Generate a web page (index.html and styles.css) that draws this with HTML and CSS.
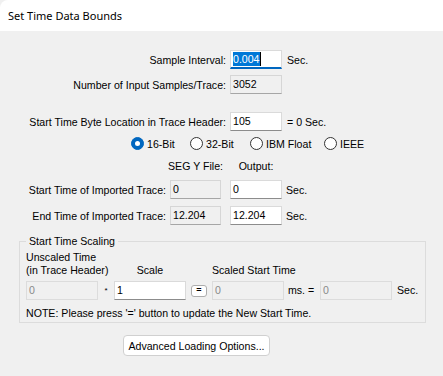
FILE: index.html
```html
<!DOCTYPE html>
<html lang="en">
<head>
  <meta charset="UTF-8">
  <title>Set Time Data Bounds</title>
  <link rel="stylesheet" href="styles.css">
</head>
<body>

  <div class="titlebar">Set Time Data Bounds</div>

  <div class="dialog">

    <div class="row">
      <span class="lbl-wide">Sample Interval:</span>
      <span class="box box-focus"><span class="sel">0.004</span><span class="caret"></span></span>
      <span class="unit">Sec.</span>
    </div>

    <div class="row row-samples">
      <span class="lbl-wide">Number of Input Samples/Trace:</span>
      <span class="box box-ro">3052</span>
    </div>

    <div class="row row-byte">
      <span class="lbl-wide">Start Time Byte Location in Trace Header:</span>
      <span class="box">105</span>
      <span class="unit">= 0 Sec.</span>
    </div>

    <div class="radios">
      <label class="radio"><span class="dot checked"></span>16-Bit</label>
      <label class="radio"><span class="dot"></span>32-Bit</label>
      <label class="radio"><span class="dot"></span>IBM Float</label>
      <label class="radio"><span class="dot"></span>IEEE</label>
    </div>

    <div class="trace-grid">
      <span></span>
      <span class="col-head">SEG Y File:</span>
      <span class="col-head col-out">Output:</span>
      <span></span>

      <span class="lbl-trace">Start Time of Imported Trace:</span>
      <span class="box box-ro box-seg">0</span>
      <span class="box box-out">0</span>
      <span class="unit">Sec.</span>

      <span class="lbl-trace">End Time of Imported Trace:</span>
      <span class="box box-ro box-seg">12.204</span>
      <span class="box box-out">12.204</span>
      <span class="unit">Sec.</span>
    </div>

    <fieldset class="group">
      <legend>Start Time Scaling</legend>
      <div class="scale-grid">
        <span class="hd-unscaled">Unscaled Time<br>(in Trace Header)</span>
        <span class="hd-scale">Scale</span>
        <span></span>
        <span class="hd-scaled">Scaled Start Time</span>

        <span class="box box-off">0</span>
        <span class="times">*</span>
        <span class="box box-scale">1</span>
        <button class="eq-btn">=</button>
        <span class="box box-off">0</span>
        <span class="ms">ms. =</span>
        <span class="box box-off">0</span>
        <span class="sec">Sec.</span>

        <span class="note">NOTE: Please press '=' button to update the New Start Time.</span>
      </div>
    </fieldset>

    <button class="adv-btn">Advanced Loading Options...</button>

  </div>

</body>
</html>
```

FILE: styles.css
```css
* {
  box-sizing: border-box;
}

body {
  margin: 0;
  background: #f0f0f0;
  font-family: "Liberation Sans", Arial, sans-serif;
  font-size: 10.6px;
  color: #000;
}

.titlebar {
  height: 31px;
  background: #fff;
  padding-left: 8px;
  line-height: 31px;
  font-family: "Noto Sans", sans-serif;
  font-size: 11px;
  border-top-left-radius: 8px;
}

.dialog {
  padding-top: 19px;
}

.row {
  display: flex;
  align-items: center;
  height: 19px;
}

.row-samples { margin-top: 6px; }
.row-byte { margin-top: 18px; }

.lbl-wide {
  width: 226px;
  margin-right: 4px;
  text-align: right;
}

.unit {
  margin-left: 5px;
}

/* text boxes */
.box {
  display: block;
  width: 52px;
  height: 19px;
  padding: 0 2px;
  line-height: 17px;
  background: #fff;
  border: 1px solid #dadada;
  border-bottom-color: #8c8c8c;
  white-space: nowrap;
}

.box-ro {
  background: #f0f0f0;
  border-color: #d6d6d6;
  border-bottom-color: #a6a6a6;
}

.box-off {
  background: #f0f0f0;
  border-color: #dcdcdc;
  color: #8a8a8a;
  width: 72px;
}

.box-focus {
  display: flex;
  align-items: center;
  border-bottom: 2px solid #0067c0;
  line-height: 16px;
}

.sel {
  background: #0078d7;
  color: #fff;
  height: 14px;
  line-height: 14px;
}

.caret {
  width: 1px;
  height: 14px;
  background: #000;
}

/* radios */
.radios {
  display: grid;
  grid-template-columns: 59px 60px 74px auto;
  margin: 5px 0 0 131px;
  height: 15px;
}

.radio {
  display: flex;
  align-items: center;
  gap: 3px;
}

.dot {
  position: relative;
  width: 13px;
  height: 13px;
  border: 1px solid #333;
  border-radius: 50%;
  background: #fff;
}

.dot.checked {
  background: #0067c0;
  border-color: #0067c0;
}

.dot.checked::after {
  content: "";
  position: absolute;
  left: 3px;
  top: 3px;
  width: 5px;
  height: 5px;
  border-radius: 50%;
  background: #fff;
}

/* imported trace */
.trace-grid {
  display: grid;
  grid-template-columns: 170px 60px 52px auto;
  grid-template-rows: 14px 19px 19px;
  row-gap: 7px;
  align-items: center;
  margin-top: 8px;
}

.trace-grid .col-head {
  display: flex;
  justify-content: center;
  white-space: nowrap;
  width: 51px;
}

.trace-grid .col-out {
  width: 52px;
}

.lbl-trace {
  text-align: right;
  padding-right: 4px;
}

.box-seg {
  width: 51px;
}

.trace-grid .unit {
  margin-left: 4px;
}

/* scaling group */
.group {
  margin: 10px 0 0 19px;
  width: 407px;
  padding: 3px 6px 2px 6px;
  border: 1px solid #dcdcdc;
}

.group legend {
  padding: 0 3px;
  line-height: 13px;
}

.scale-grid {
  display: grid;
  grid-template-columns: 72px 16px 72px 26px 72px 36px 72px auto;
  align-items: end;
  line-height: 13px;
}

.hd-unscaled {
  grid-column: span 2;
  margin-bottom: 4px;
}

.hd-scale {
  text-align: center;
  margin-bottom: 4px;
}

.hd-scaled {
  grid-column: span 4;
  margin-bottom: 4px;
}

.times {
  text-align: center;
  align-self: center;
  font-size: 8px;
}

.box-scale {
  width: 72px;
}

.eq-btn {
  justify-self: center;
  align-self: center;
  width: 16px;
  height: 12px;
  padding: 0;
  font: bold 9px "Liberation Sans", Arial, sans-serif;
  line-height: 9px;
  background: #fff;
  border: 1px solid #adadad;
  border-radius: 3px;
}

.ms {
  align-self: center;
  padding-left: 4px;
}

.sec {
  align-self: center;
  padding-left: 5px;
}

.note {
  grid-column: 1 / -1;
  margin-top: 7px;
}

.adv-btn {
  display: block;
  margin: 12px 0 0 123px;
  width: 147px;
  height: 21px;
  padding: 0;
  font: inherit;
  background: #fff;
  border: 1px solid #d0d0d0;
  border-radius: 4px;
}
```
